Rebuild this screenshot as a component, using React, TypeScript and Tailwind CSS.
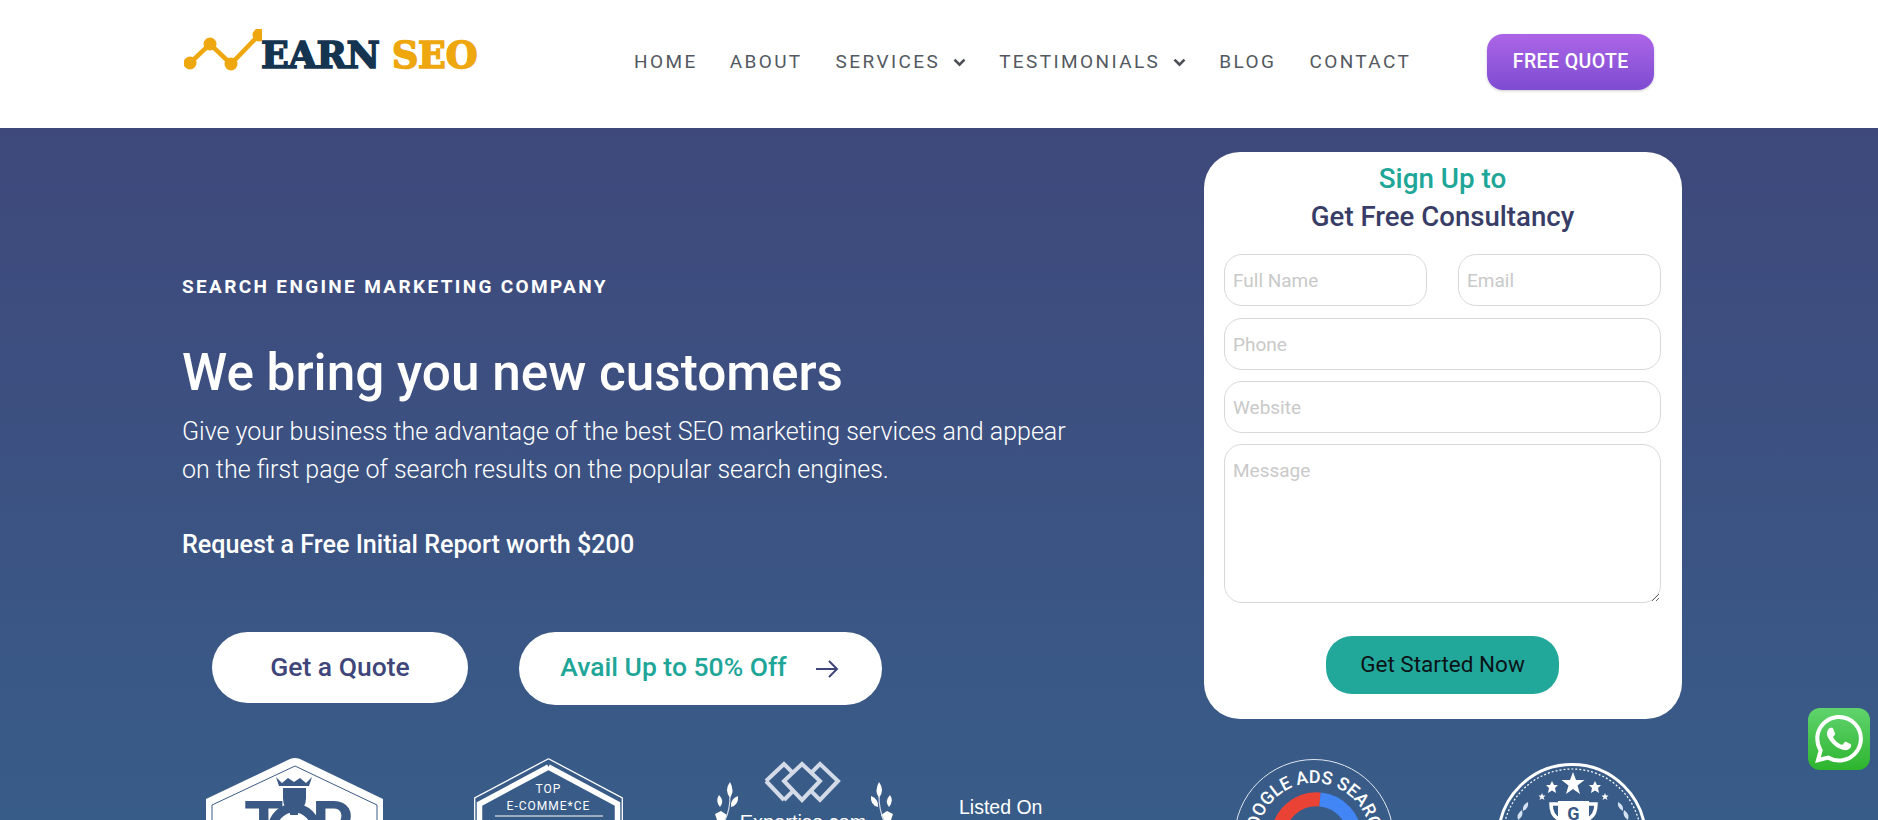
import React from "react";

const roboto = "font-['Roboto',sans-serif]";

function Logo() {
  return (
    <div className="flex items-end w-[294px] h-[44px]">
      <svg width="78" height="44" viewBox="0 0 78 44" className="shrink-0 mb-[2px]">
        <path d="M6 34 L26 15 L47 35 L75 6" stroke="#eea70f" strokeWidth="4.500" fill="none" />
        <g fill="#eea70f">
          <circle cx="6" cy="34" r="6.500" />
          <circle cx="26" cy="15" r="6.500" />
          <circle cx="47" cy="35" r="6.500" />
          <circle cx="75" cy="6" r="6.500" />
        </g>
      </svg>
      <span className="font-['DejaVu_Serif',serif] font-bold text-[36.500px] leading-[38px] whitespace-nowrap -ml-[1px] tracking-[-0.3px] text-[#14344f] [-webkit-text-stroke:1.6px_currentColor]">
        EARN <span className="text-[#eea70f]">SEO</span>
      </span>
    </div>
  );
}

function Chevron() {
  return (
    <svg width="13" height="9" viewBox="0 0 13 9" className="ml-[13px]">
      <path d="M1.5 1.6 L6.5 6.6 L11.5 1.6" stroke="#4b4f55" strokeWidth="2.6" fill="none" />
    </svg>
  );
}

function Nav() {
  const items: [string, boolean, string][] = [
    ["HOME", false, "mr-[32px]"],
    ["ABOUT", false, "mr-[33px]"],
    ["SERVICES", true, "mr-[33px]"],
    ["TESTIMONIALS", true, "mr-[33px]"],
    ["BLOG", false, "mr-[33px]"],
    ["CONTACT", false, ""],
  ];
  return (
    <nav className="flex items-center ml-[156px]">
      {items.map(([t, c, m]) => (
        <span key={t} className={`flex items-center text-[19px] tracking-[2.4px] text-[#54595f] ${m}`}>
          {t}
          {c && <Chevron />}
        </span>
      ))}
    </nav>
  );
}

function Field({ ph, className = "" }: { ph: string; className?: string }) {
  return (
    <input
      placeholder={ph}
      className={`h-[52px] min-w-0 rounded-[18px] border border-[#d8d8d8] bg-white px-[8px] text-[19px] outline-none placeholder:text-[#c9c9c9] ${className}`}
    />
  );
}

function Form() {
  return (
    <form className="w-[478px] h-[567px] shrink-0 rounded-[36px] bg-white pl-[20px] pr-[21px] pt-[8px]">
      <div className="text-center text-[27.800px] leading-[38px] font-medium text-[#20a698]">Sign Up to</div>
      <div className="text-center text-[27.600px] leading-[38px] font-medium text-[#383d68]">Get Free Consultancy</div>
      <div className="mt-[18px] flex flex-col gap-[11px]">
        <div className="flex gap-[31px] mb-[1px]">
          <Field ph="Full Name" className="w-[203px]" />
          <Field ph="Email" className="w-[203px]" />
        </div>
        <Field ph="Phone" className="w-full" />
        <Field ph="Website" className="w-full" />
        <textarea
          placeholder="Message"
          className="block w-full h-[159px] rounded-[18px] border border-[#d8d8d8] bg-white px-[8px] py-[14px] text-[19px] leading-[24px] outline-none placeholder:text-[#c9c9c9]"
        />
      </div>
      <div className="mt-[33px] flex justify-center">
        <button type="button" className="w-[233px] h-[58px] rounded-[26px] bg-[#22a89a] text-[22.500px] text-[#0b1216]">
          Get Started Now
        </button>
      </div>
    </form>
  );
}

function Hero() {
  return (
    <div className="flex">
      <div className="w-[1204px] shrink-0 pl-[182px] pt-[123px]">
        <p className="text-[19px] leading-[24px] font-bold tracking-[2.350px] text-white">SEARCH ENGINE MARKETING COMPANY</p>
        <h1 className="mt-[45px] text-[51.300px] leading-[58px] font-medium text-white">We bring you new customers</h1>
        <p className="mt-[11px] text-[25px] leading-[38px] font-light text-white">
          Give your business the advantage of the best SEO marketing services and appear
          <br />
          on the first page of search results on the popular search engines.
        </p>
        <p className="mt-[38px] text-[25.150px] leading-[36px] font-medium text-white">Request a Free Initial Report worth $200</p>
        <div className="mt-[69px] ml-[30px] flex items-start gap-[51px]">
          <button type="button" className="w-[256px] h-[71px] rounded-[36px] bg-white pb-[2px] text-[26.500px] font-medium text-[#3f4679]">
            Get a Quote
          </button>
          <button type="button" className="flex items-center justify-center w-[363px] h-[73px] rounded-[37px] bg-white pr-[2px] text-[26.500px] font-medium text-[#20a698]">
            <span className="pb-[3px]">Avail Up to 50% Off</span>
            <svg width="24" height="20" viewBox="0 0 24 20" className="ml-[28px]" fill="none" stroke="#3f4679" strokeWidth="2">
              <path d="M1 10 H22 M14 2 L22 10 L14 18" />
            </svg>
          </button>
        </div>
      </div>
      <Form />
    </div>
  );
}

function Badges() {
  return (
    <div className="mt-[39px] flex items-start pl-[206px] h-[62px]">
      {/* TOP badge */}
      <div className="relative w-[177px] h-[62px] shrink-0 overflow-hidden">
        <svg width="177" height="90" viewBox="0 0 177 90" className="absolute top-0 left-0">
          <path d="M84 1 Q89 -1 94 1 L177 41 V90 H0 V41 Z" fill="#fff" />
          <path d="M89 8 L171 47 V90 H6 V47 Z" fill="none" stroke="#3a5a85" strokeWidth="1" />
          <circle cx="88" cy="72" r="22" fill="none" stroke="#3a5a85" strokeWidth="9" />
          <path d="M70 19 L76 25 L82 20 L88 24 L94 20 L100 25 L106 19 L103 28 H73 Z" fill="#3a5a85" />
          <path d="M77 30 H100 V40 Q100 50 92 52 V57 H84 V52 Q77 50 77 40 Z" fill="#3a5a85" />
        </svg>
        <span className="absolute left-[38px] top-[36px] font-bold text-[64px] leading-[64px] text-[#3a5a85]">T</span>
        <span className="absolute left-[106px] top-[36px] font-bold text-[64px] leading-[64px] text-[#3a5a85]">P</span>
      </div>
      {/* ecommerce badge */}
      <div className="relative w-[149px] h-[62px] shrink-0 ml-[91px]">
        <svg width="149" height="62" viewBox="0 0 149 62" className="absolute top-0 left-0" fill="none">
          <path d="M74.500 0.700 L148.300 40 V62 M0.700 62 V40 L74.500 0.700" stroke="#fff" strokeWidth="1.300" />
          <path d="M74.500 9 L143.500 46 V62 M5.500 62 V46 L74.500 9" stroke="#fff" strokeWidth="5.500" />
          <path d="M21 58 H129" stroke="#fff" strokeWidth="1" />
        </svg>
        <div className="absolute inset-x-0 top-[25px] text-center text-[12px] leading-[12px] tracking-[1px] text-white">TOP</div>
        <div className="absolute inset-x-0 top-[42px] text-center text-[12px] leading-[12px] tracking-[1px] text-white">E-COMME*CE</div>
      </div>
      {/* Expertise */}
      <div className="relative w-[180px] h-[62px] shrink-0 ml-[90px]">
        <svg width="180" height="62" viewBox="0 0 180 62" className="absolute top-0 left-0" fill="none">
          <g stroke="#d3dbe8" strokeWidth="4">
            <path d="M53 23 L71 6 L80 15 M71 42 L53 23 M71 42 L80 33" />
            <path d="M89 6 L107 23 L89 42 L71 23 Z" />
            <path d="M98 15 L107 6 L125 23 L107 42 L98 33" />
          </g>
          <g fill="#fff">
            <path d="M17 24 q-6 8 0 16 q5 -7 0 -16 Z" />
            <path d="M6 37 q-4 6 1 12 q5 -6 -1 -12 Z" />
            <path d="M25 38 q-8 3 -7 11 q8 -2 7 -11 Z" />
            <path d="M2 56 l6 -3 l6 4 l-2 5 h-8 Z" />
            <path d="M166 24 q6 8 0 16 q-5 -7 0 -16 Z" />
            <path d="M177 37 q4 6 -1 12 q-5 -6 1 -12 Z" />
            <path d="M158 38 q8 3 7 11 q-8 -2 -7 -11 Z" />
            <path d="M180 56 l-6 -3 l-6 4 l2 5 h8 Z" />
          </g>
          <path d="M17 38 Q17 52 12 62 M166 38 Q166 52 171 62" stroke="#d3dbe8" strokeWidth="1.200" />
        </svg>
        <div className="absolute inset-x-0 top-[54px] text-center text-[20px] leading-[20px] text-white font-['Liberation_Sans',sans-serif]">Expertise.com</div>
      </div>
      <div className="shrink-0 ml-[66px] pt-[39px] w-[110px] text-[19.500px] leading-[20px] text-white font-['Liberation_Sans',sans-serif]">Listed On</div>
      {/* Google Ads */}
      <div className="relative w-[162px] h-[61px] shrink-0 ml-[165px] mt-[1px] overflow-hidden">
        <svg width="162" height="162" viewBox="0 0 162 162" className="absolute top-0 left-0" fill="none">
          <circle cx="80" cy="80" r="79.500" stroke="#dfe6ee" strokeWidth="1" />
          <path id="gads" d="M 24 80 A 56 56 0 0 1 136 80" />
          <text fontFamily="Roboto, sans-serif" fontSize="18" fill="#fff" fontWeight="500">
            <textPath href="#gads" startOffset="50%" textAnchor="middle">GOOGLE ADS SEARCH</textPath>
          </text>
          <path d="M 44 79 A 38.500 38.500 0 0 1 86 40.500" stroke="#ea4335" strokeWidth="14" />
          <path d="M 86 40.500 A 38.500 38.500 0 0 1 121 79" stroke="#4285f4" strokeWidth="14" />
        </svg>
      </div>
      {/* Award */}
      <div className="relative w-[150px] h-[57px] shrink-0 ml-[101px] mt-[5px] overflow-hidden">
        <svg width="150" height="150" viewBox="0 0 150 150" className="absolute top-0 left-0" fill="none">
          <circle cx="75" cy="75" r="73.500" stroke="#fff" strokeWidth="3" />
          <circle cx="75" cy="75" r="69" stroke="#fff" strokeWidth="1.200" strokeDasharray="2 2" />
          <g fill="#fff">
            <polygon points="76,9 79,17 87.500,17 80.500,22.500 83,31 76,26 69,31 71.500,22.500 64.500,17 73,17" />
            <polygon points="55,18 57,22 61,22 58,25 59,30 55,27.500 51,30 52,25 49,22 53,22" />
            <polygon points="98,18 100,22 104,22 101,25 102,30 98,27.500 94,30 95,25 92,22 96,22" />
            <polygon points="45,30 46,32.500 48.500,32.500 46.500,34.500 47.500,37 45,35.500 42.500,37 43.500,34.500 41.500,32.500 44,32.500" />
            <polygon points="108,30 109,32.500 111.500,32.500 109.500,34.500 110.500,37 108,35.500 105.500,37 106.500,34.500 104.500,32.500 107,32.500" />
            <path d="M61 38 H92 V57 H61 Z" />
          </g>
          <path d="M62 41 H54 Q54 54 64 57 M91 41 H99 Q99 54 89 57" stroke="#fff" strokeWidth="3.500" />
          <text x="76.500" y="57" textAnchor="middle" fontFamily="Roboto, sans-serif" fontWeight="700" fontSize="18" fill="#3a5a85">G</text>
          <g fill="#d4e2f3">
            <path d="M31 39 q1 6 -5 9 q-1 -6 5 -9 Z" />
            <path d="M25 47 q2 6 -4 10 q-2 -6 4 -10 Z" />
            <path d="M121 39 q-1 6 5 9 q1 -6 -5 -9 Z" />
            <path d="M127 47 q-2 6 4 10 q2 -6 -4 -10 Z" />
          </g>
        </svg>
      </div>
    </div>
  );
}

function WhatsApp() {
  return (
    <div className="fixed left-[1808px] top-[708px] w-[62px] h-[62px] rounded-[12px] bg-gradient-to-b from-[#5fd46c] to-[#2cb52c] flex items-center justify-center">
      <svg width="48" height="48" viewBox="0 0 24 24" fill="#fff">
        <path d="M17.472 14.382c-.297-.149-1.758-.867-2.03-.967-.273-.099-.471-.148-.67.15-.197.297-.767.966-.94 1.164-.173.199-.347.223-.644.075-.297-.15-1.255-.463-2.39-1.475-.883-.788-1.48-1.761-1.653-2.059-.173-.297-.018-.458.13-.606.134-.133.298-.347.446-.52.149-.174.198-.298.298-.497.099-.198.05-.371-.025-.52-.075-.149-.669-1.612-.916-2.207-.242-.579-.487-.5-.669-.51-.173-.008-.371-.01-.57-.01-.198 0-.52.074-.792.372-.272.297-1.04 1.016-1.04 2.479 0 1.462 1.065 2.875 1.213 3.074.149.198 2.096 3.2 5.077 4.487.709.306 1.262.489 1.694.625.712.227 1.36.195 1.871.118.571-.085 1.758-.719 2.006-1.413.248-.694.248-1.289.173-1.413-.074-.124-.272-.198-.57-.347m-5.421 7.403h-.004a9.87 9.87 0 01-5.031-1.378l-.361-.214-3.741.982.998-3.648-.235-.374a9.86 9.86 0 01-1.51-5.26c.001-5.45 4.436-9.884 9.888-9.884 2.64 0 5.122 1.03 6.988 2.898a9.825 9.825 0 012.893 6.994c-.003 5.45-4.437 9.884-9.885 9.884m8.413-18.297A11.815 11.815 0 0012.05 0C5.495 0 .16 5.335.157 11.892c0 2.096.547 4.142 1.588 5.945L.057 24l6.305-1.654a11.882 11.882 0 005.683 1.448h.005c6.554 0 11.89-5.335 11.893-11.893a11.821 11.821 0 00-3.48-8.413Z" />
      </svg>
    </div>
  );
}

export default function App() {
  return (
    <div className={`h-[820px] overflow-hidden ${roboto}`}>
      <header className="h-[128px] bg-white flex items-center pl-[184px] pb-[4px]">
        <div className="-mt-[18px]"><Logo /></div>
        <Nav />
        <button type="button" className="ml-[76px] w-[167px] h-[56px] rounded-[16px] bg-gradient-to-b from-[#ad65e7] to-[#7d4bd1] text-[19.500px] tracking-[0.4px] font-medium text-white shadow-[0_1px_3px_rgba(0,0,0,0.2)]">
          FREE QUOTE
        </button>
      </header>
      <main className="h-[692px] overflow-hidden bg-gradient-to-b from-[#3e487b] to-[#385c88] pt-[24px]">
        <Hero />
        <Badges />
      </main>
      <WhatsApp />
    </div>
  );
}
